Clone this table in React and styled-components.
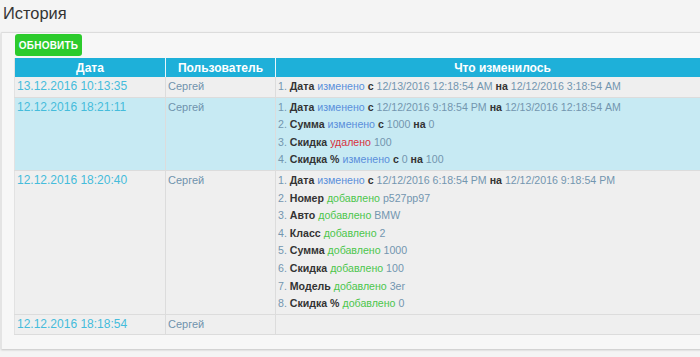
import styled, { createGlobalStyle } from "styled-components";

const GlobalStyle = createGlobalStyle`
  html, body {
    margin: 0;
    padding: 0;
    background: #f4f4f4;
    font-family: "Liberation Sans", Arial, sans-serif;
    overflow: hidden;
  }
`;

const Page = styled.div`
  width: 700px;
  height: 357px;
  overflow: hidden;
`;

const Title = styled.h1`
  margin: 0;
  padding: 4px 0 0 3px;
  height: 28px;
  font-size: 16.4px;
  font-weight: normal;
  color: #333;
`;

const Panel = styled.div`
  margin-left: 1px;
  width: 760px;
  background: #f7f7f7;
  border-top: 1px solid #dcdcdc;
  border-left: 1px solid #e4e4e4;
  box-shadow: 0 1px 2px rgba(0, 0, 0, 0.2);
  padding: 1px 0 14px 12px;
`;

const RefreshButton = styled.button`
  display: block;
  margin: 0 0 2px 1px;
  height: 22px;
  width: 67px;
  padding: 0;
  border: none;
  border-radius: 3px;
  background: #2ccb2c;
  color: #fff;
  font-family: inherit;
  font-size: 10px;
  font-weight: bold;
  letter-spacing: 0.2px;
`;

const Table = styled.table`
  border-collapse: collapse;
  width: 716px;
  table-layout: fixed;
  border-left: 1px solid #e2e2e2;
`;

const Th = styled.th`
  background: #1eb0d9;
  color: #fff;
  font-size: 12px;
  font-weight: bold;
  height: 19px;
  padding: 0;
  border-right: 1px solid #e8f6fb;
`;

const Tr = styled.tr`
  background: ${(p) => (p.$active ? "#c7eaf3" : "#efefef")};
  border-bottom: 1px solid #dcdcdc;
`;

const Td = styled.td`
  vertical-align: top;
  padding: 1px 2px 1px 2px;
  border-right: 1px solid #dcdcdc;
  line-height: 17.6px;
  font-size: 11px;
`;

const DateText = styled.span`
  font-size: 12px;
  color: #45bcdb;
`;

const User = styled.span`
  color: #6f93ad;
`;

const ChangeLine = styled.div`
  color: #7396af;
  font-size: 10.6px;
  white-space: nowrap;
  b {
    color: #333;
  }
`;

const Action = styled.span`
  color: ${(p) =>
    p.$kind === "added" ? "#4cc64c" : p.$kind === "removed" ? "#d8323c" : "#5a8fdb"};
`;

const labels = { changed: "изменено", added: "добавлено", removed: "удалено" };

const rows = [
  {
    date: "13.12.2016 10:13:35",
    changes: [
      ["Дата", "changed", "12/13/2016 12:18:54 AM", "12/12/2016 3:18:54 AM"],
    ],
  },
  {
    date: "12.12.2016 18:21:11",
    active: true,
    changes: [
      ["Дата", "changed", "12/12/2016 9:18:54 PM", "12/13/2016 12:18:54 AM"],
      ["Сумма", "changed", "1000", "0"],
      ["Скидка", "removed", "100"],
      ["Скидка %", "changed", "0", "100"],
    ],
  },
  {
    date: "12.12.2016 18:20:40",
    changes: [
      ["Дата", "changed", "12/12/2016 6:18:54 PM", "12/12/2016 9:18:54 PM"],
      ["Номер", "added", "р527рр97"],
      ["Авто", "added", "BMW"],
      ["Класс", "added", "2"],
      ["Сумма", "added", "1000"],
      ["Скидка", "added", "100"],
      ["Модель", "added", "3er"],
      ["Скидка %", "added", "0"],
    ],
  },
  { date: "12.12.2016 18:18:54", changes: [] },
];

function Change({ n, field, kind, from, to }) {
  return (
    <ChangeLine>
      {n}. <b>{field}</b> <Action $kind={kind}>{labels[kind]}</Action>{" "}
      {to !== undefined ? (
        <>
          <b>с</b> {from} <b>на</b> {to}
        </>
      ) : (
        from
      )}
    </ChangeLine>
  );
}

export default function App() {
  return (
    <Page>
      <GlobalStyle />
      <Title>История</Title>
      <Panel>
        <RefreshButton>ОБНОВИТЬ</RefreshButton>
        <Table>
          <colgroup>
            <col style={{ width: "151px" }} />
            <col style={{ width: "110px" }} />
            <col />
          </colgroup>
          <thead>
            <tr>
              <Th>Дата</Th>
              <Th>Пользователь</Th>
              <Th>Что изменилось</Th>
            </tr>
          </thead>
          <tbody>
            {rows.map((r) => (
              <Tr key={r.date} $active={r.active}>
                <Td>
                  <DateText>{r.date}</DateText>
                </Td>
                <Td>
                  <User>Сергей</User>
                </Td>
                <Td>
                  {r.changes.map((c, i) => (
                    <Change
                      key={i}
                      n={i + 1}
                      field={c[0]}
                      kind={c[1]}
                      from={c[2]}
                      to={c[3]}
                    />
                  ))}
                </Td>
              </Tr>
            ))}
          </tbody>
        </Table>
      </Panel>
    </Page>
  );
}
